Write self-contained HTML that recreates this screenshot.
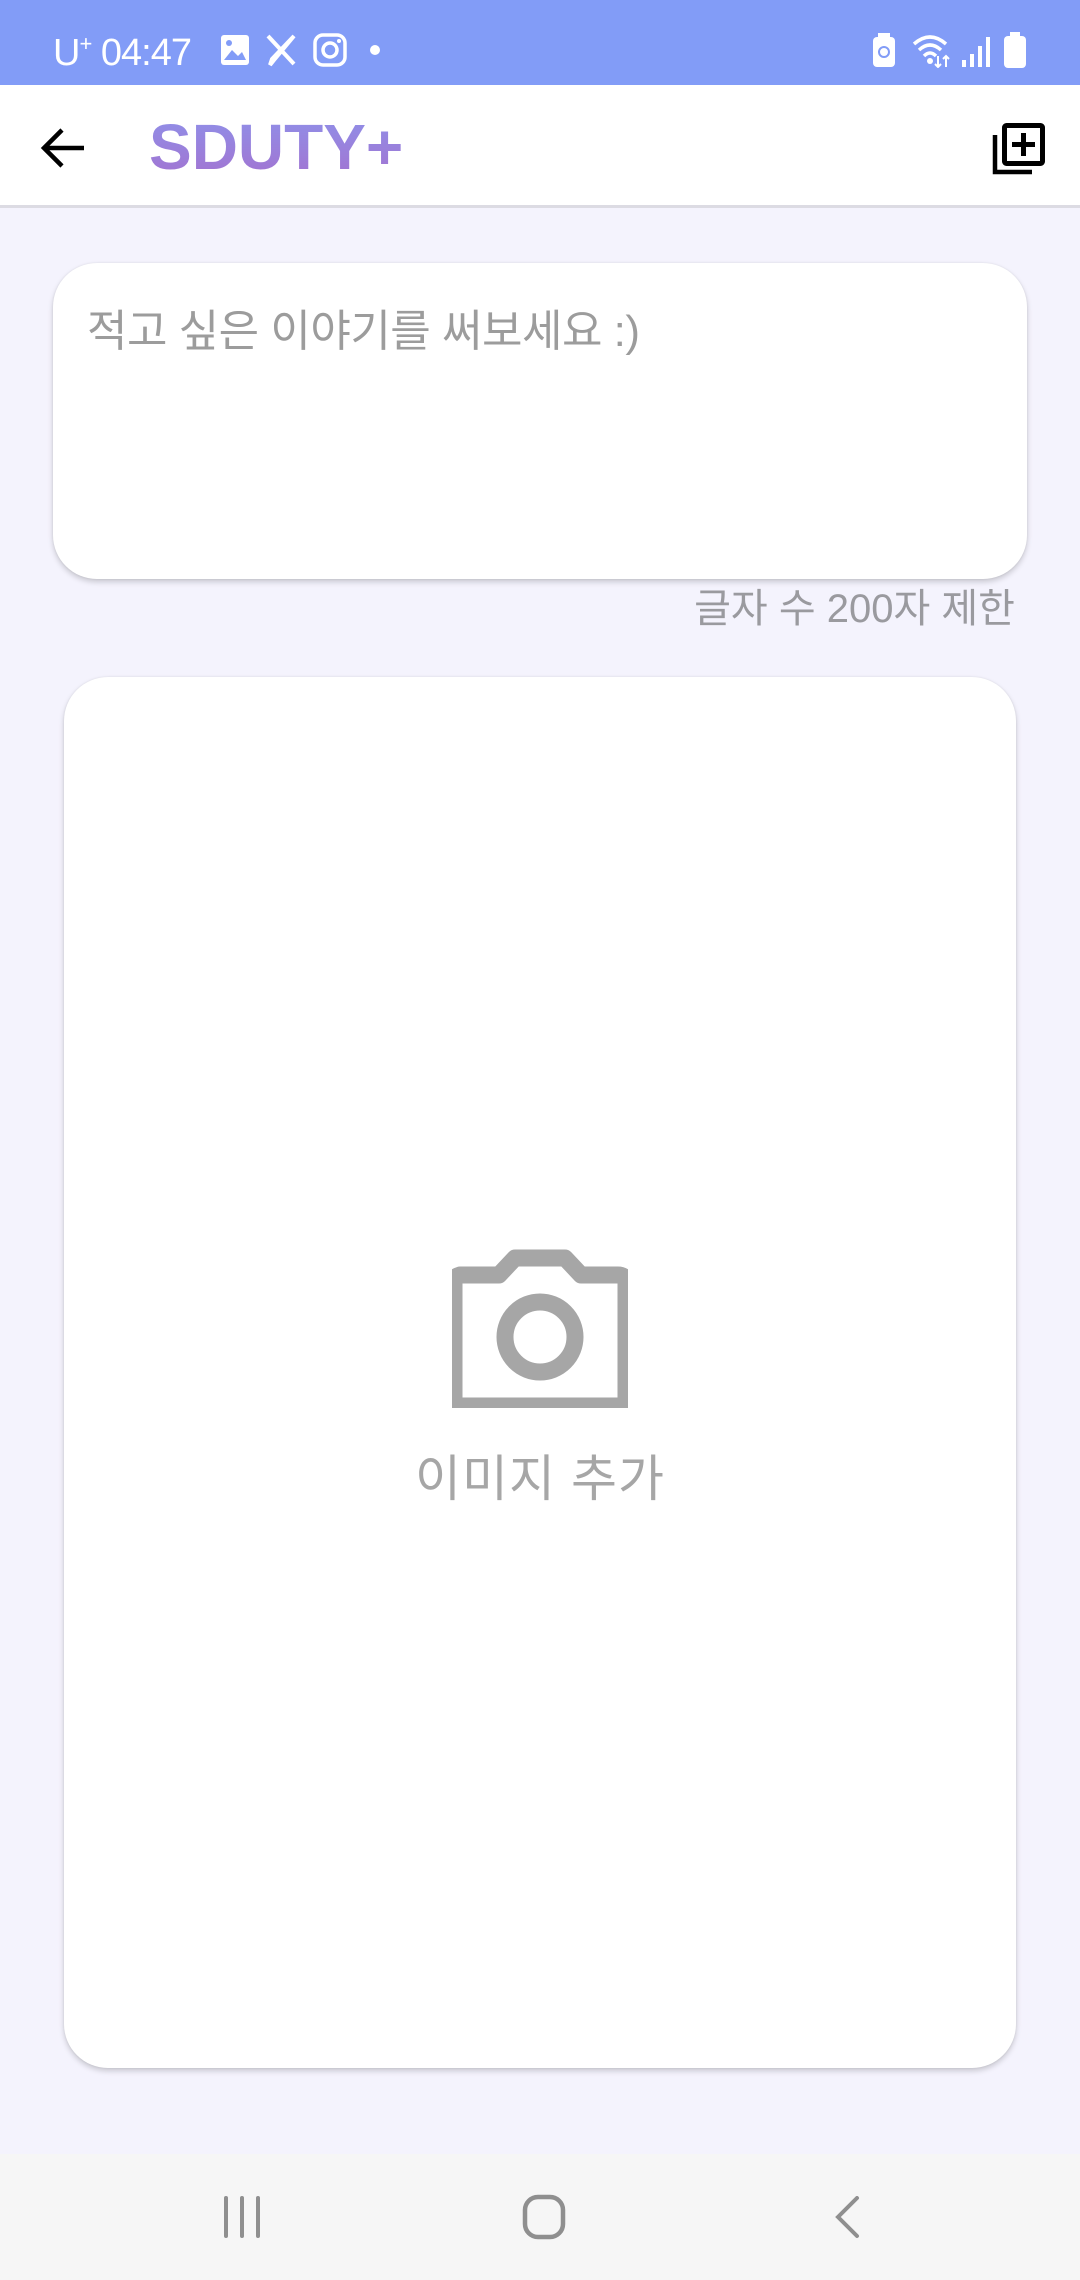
<!DOCTYPE html>
<html><head><meta charset="utf-8"><style>
*{margin:0;padding:0;box-sizing:border-box}
body{width:1080px;height:2280px;background:#f4f3fd;position:relative;overflow:hidden;font-family:"Liberation Sans","Noto Sans CJK KR",sans-serif}
.abs{position:absolute}
#sb{left:0;top:0;width:1080px;height:85px;background:#829cf7;color:#fff}
#hd{left:0;top:85px;width:1080px;height:123px;background:#fff;border-bottom:3px solid #dcdbe3}
.card{background:#fff;border-radius:44px;box-shadow:0 3px 6px rgba(0,0,0,.18),0 0 2px rgba(0,0,0,.08)}
#nav{left:0;top:2154px;width:1080px;height:126px;background:#f6f6f6}
</style></head><body>
<div id="sb" class="abs">
 <div class="abs" style="left:53px;top:24px;font-size:38px;line-height:40px;letter-spacing:-1px">U<sup style="font-size:22px;vertical-align:14px">+</sup> 04:47</div>
 <svg class="abs" style="left:220px;top:34px" width="30" height="32" viewBox="0 0 30 32"><rect x="1" y="1" width="28" height="30" rx="3" fill="#fff"/><path d="M4 26 L12 16 L18 22 L22 18 L26 26Z" fill="#829cf7"/><circle cx="9" cy="9" r="3" fill="#829cf7"/></svg>
 <svg class="abs" style="left:264px;top:32px" width="34" height="36" viewBox="0 0 34 36"><path d="M4 4 L30 32 M30 4 L10 28 L6 33 L8 27 Z" stroke="#fff" stroke-width="4" fill="none"/></svg>
 <svg class="abs" style="left:313px;top:33px" width="34" height="34" viewBox="0 0 34 34"><rect x="2" y="2" width="30" height="30" rx="8" stroke="#fff" stroke-width="3.5" fill="none"/><circle cx="17" cy="17" r="7" stroke="#fff" stroke-width="3.5" fill="none"/><circle cx="26" cy="8" r="2" fill="#fff"/></svg>
 <div class="abs" style="left:370px;top:45px;width:10px;height:10px;border-radius:5px;background:#fff"></div>
 <svg class="abs" style="left:872px;top:33px" width="24" height="34" viewBox="0 0 24 34"><rect x="6" y="0" width="12" height="5" fill="#fff"/><rect x="1" y="4" width="22" height="30" rx="4" fill="#fff"/><circle cx="12" cy="19" r="5" stroke="#829cf7" stroke-width="2" fill="none"/></svg>
 <svg class="abs" style="left:912px;top:34px" width="44" height="34" viewBox="0 0 44 34"><path d="M2 10 Q18 -4 34 10 M7 16 Q18 6 29 16 M12 22 Q18 16 24 22" stroke="#fff" stroke-width="3.5" fill="none"/><circle cx="18" cy="27" r="3" fill="#fff"/><path d="M26 22 V33 M23 30 L26 33 L29 30 M34 33 V22 M31 25 L34 22 L37 25" stroke="#fff" stroke-width="2" fill="none"/></svg>
 <svg class="abs" style="left:960px;top:34px" width="32" height="34" viewBox="0 0 32 34"><rect x="2" y="26" width="4" height="7" fill="#fff"/><rect x="10" y="20" width="4" height="13" fill="#fff"/><rect x="18" y="12" width="4" height="21" fill="#fff"/><rect x="26" y="3" width="4" height="30" fill="#fff"/></svg>
 <svg class="abs" style="left:1004px;top:32px" width="22" height="36" viewBox="0 0 22 36"><rect x="6" y="0" width="10" height="5" fill="#fff"/><rect x="0" y="4" width="22" height="32" rx="4" fill="#fff"/></svg>
</div>
<div id="hd" class="abs">
 <svg class="abs" style="left:40px;top:42px" width="46" height="42" viewBox="0 0 46 42"><path d="M44 21 H5 M22 3 L4 21 L22 39" stroke="#000" stroke-width="4.5" fill="none"/></svg>
 <div class="abs" style="left:149px;top:24px;font-size:64px;line-height:76px;font-weight:bold;background:linear-gradient(#8e92ea,#a471cf);-webkit-background-clip:text;background-clip:text;color:transparent">SDUTY+</div>
 <svg class="abs" style="left:992px;top:38px" width="54" height="52" viewBox="0 0 54 52"><path d="M3 12 V49 H40" stroke="#000" stroke-width="4.5" fill="none"/><rect x="12.5" y="2.5" width="38" height="38" rx="2" stroke="#000" stroke-width="5" fill="none"/><path d="M31.5 10 V33 M20 21.5 H43" stroke="#000" stroke-width="5"/></svg>
</div>
<div class="abs card" style="left:53px;top:263px;width:974px;height:316px"></div>
<div class="abs" style="left:87px;top:302px;font-size:44px;line-height:60px;color:#9c9c9c;letter-spacing:-0.5px">적고 싶은 이야기를 써보세요 :)</div>
<div class="abs" style="right:65px;top:581px;font-size:40px;line-height:56px;color:#9a9a9f">글자 수 200자 제한</div>
<div class="abs card" style="left:64px;top:677px;width:952px;height:1391px"></div>
<svg class="abs" style="left:452px;top:1249px" width="176" height="159" viewBox="0 0 176 159"><path d="M8 26 H47 L63 9 H113 L129 26 H166 Q174 26 174 34 V149 Q174 157 166 157 H10 Q2 157 2 149 V34 Q2 26 10 26Z" fill="none" stroke="#a6a6a6" stroke-width="17" stroke-linejoin="round"/><circle cx="88" cy="88" r="35" fill="none" stroke="#a6a6a6" stroke-width="17"/></svg>
<div class="abs" style="left:0;width:1080px;text-align:center;top:1446px;font-size:50px;line-height:66px;color:#a6a6a6;letter-spacing:1px">이미지 추가</div>
<div id="nav" class="abs">
 <svg class="abs" style="left:220px;top:42px" width="44" height="44" viewBox="0 0 44 44"><path d="M6 2 V40 M22 2 V40 M38 2 V40" stroke="#8f8f8f" stroke-width="4" stroke-linecap="round"/></svg>
 <svg class="abs" style="left:522px;top:40px" width="46" height="46" viewBox="0 0 46 46"><rect x="3" y="3" width="38" height="40" rx="13" stroke="#8f8f8f" stroke-width="4.5" fill="none"/></svg>
 <svg class="abs" style="left:832px;top:42px" width="30" height="44" viewBox="0 0 30 44"><path d="M25 2 L6 21 L25 40" stroke="#8f8f8f" stroke-width="4" fill="none" stroke-linecap="round"/></svg>
</div>
</body></html>
